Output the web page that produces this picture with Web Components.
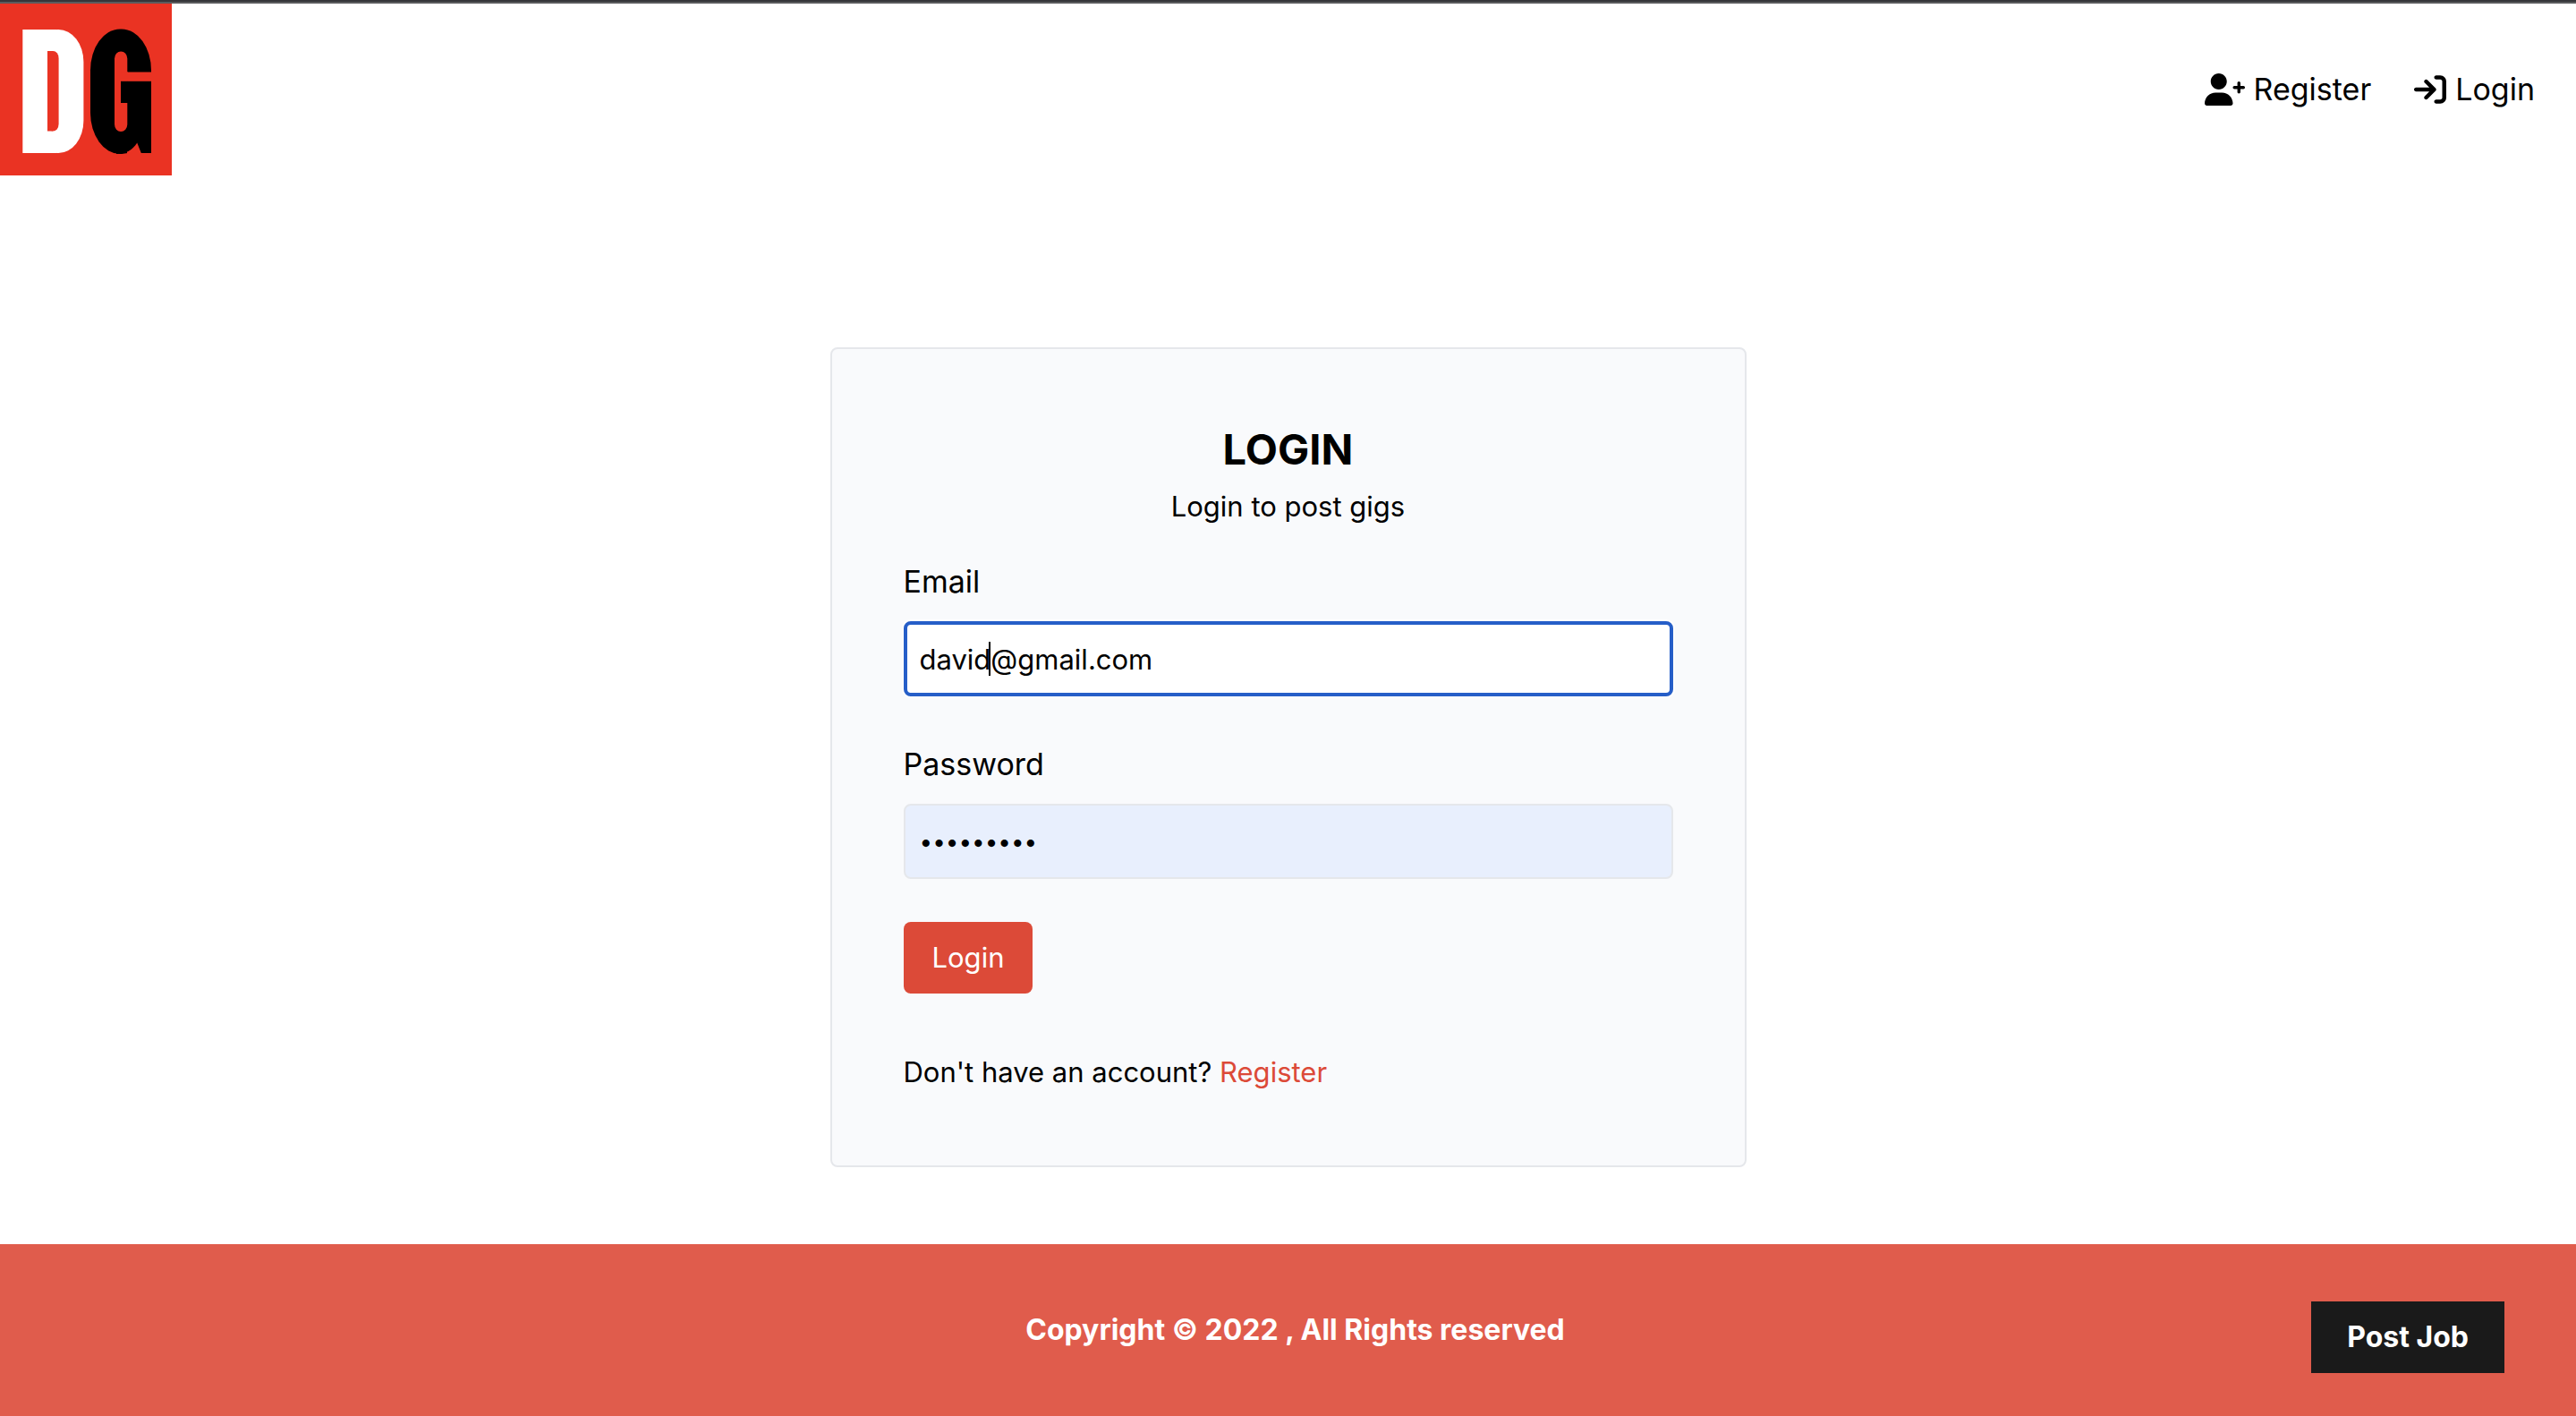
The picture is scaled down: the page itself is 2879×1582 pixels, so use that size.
<!DOCTYPE html>
<html lang="en">
<head>
<meta charset="utf-8">
<meta name="viewport" content="width=device-width, initial-scale=1">
<title>Login</title>
<style>
  body {
    margin: 0;
    background: #fff;
    color: #000;
    font-family: Inter, "Liberation Sans", sans-serif;
    font-size: 31px;
    line-height: 48px;
    --brand: #dc4a38;
    --text-lg: 34px;
  }
</style>
</head>
<body>
<gig-page>
  <site-header slot="header">
    <nav-link href="#register" icon="user-plus">Register</nav-link>
    <nav-link href="#login" icon="enter">Login</nav-link>
  </site-header>
  <login-card heading="Login" intro="Login to post gigs"></login-card>
  <site-footer slot="footer">Copyright © 2022 , All Rights reserved</site-footer>
</gig-page>

<script>
const define = (name, html, setup) => {
  const template = document.createElement('template');
  template.innerHTML = '<style>*,::before,::after{box-sizing:border-box}</style>' + html;
  customElements.define(name, class extends HTMLElement {
    constructor() {
      super();
      this.attachShadow({ mode: 'open' }).append(template.content.cloneNode(true));
    }
    connectedCallback() { if (setup) setup(this, this.shadowRoot); }
  });
};

define('gig-page', `
  <style>
    :host { display: flex; flex-direction: column; min-height: 100vh; box-sizing: border-box;
            border-top: 4px solid #5a5b5d; background: #fff; background-clip: padding-box; position: relative; }
    :host::before { content: ""; position: absolute; top: -4px; left: 0; right: 0; height: 2px; background: #35363a; }
    main { flex: 1; display: flex; justify-content: center; align-items: flex-start; padding: 192px 32px 86px; }
  </style>
  <slot name="header"></slot>
  <main><slot></slot></main>
  <slot name="footer"></slot>`);

/* Monogram built from plain blocks on a red square */
define('brand-logo', `
  <style>
    :host { display: block; }
    svg { display: block; width: 192px; height: 192px; }
  </style>
  <svg viewBox="0 0 192 192" role="img" aria-label="DG">
    <rect width="192" height="192" fill="#ea3323"/>
    <g fill="#fff">
      <rect x="25.3" y="29" width="38" height="138"/>
      <rect x="36" y="29" width="57.4" height="138" rx="28" ry="36"/>
    </g>
    <g fill="#ea3323">
      <rect x="53" y="53" width="12.600" height="89.500" rx="6.300" ry="8"/>
      <rect x="53" y="53" width="6" height="89.500"/>
    </g>
    <rect x="101" y="28.500" width="68" height="139.500" rx="33" ry="46"/>
    <rect x="140" y="87" width="29" height="50"/>
    <rect x="142" y="148" width="28" height="22" fill="#ea3323"/>
    <path d="M130 168C140 168 148 164 153.300 155.500V130H130Z"/>
    <path d="M153 130V155L157.800 167H169V130Z"/>
    <g fill="#ea3323">
      <rect x="128" y="53.500" width="14.300" height="89.500" rx="7.100" ry="8"/>
      <rect x="142" y="76.500" width="28" height="10.300"/>
      <rect x="135" y="76.500" width="8" height="10.300"/>
    </g>
    <rect x="135" y="86.800" width="8" height="24.200"/>
  </svg>`);

define('site-header', `
  <style>
    :host { display: block; }
    header { display: flex; justify-content: space-between; align-items: center; }
    a { display: block; }
    nav { display: flex; gap: 48px; padding-right: 46px; }
  </style>
  <header>
    <a href="#home"><brand-logo></brand-logo></a>
    <nav><slot></slot></nav>
  </header>`);

const icons = {
  'user-plus': ['0 0 640 512', 45, 'M224 256c70.7 0 128-57.31 128-128S294.7 0 224 0C153.3 0 96 57.31 96 128S153.3 256 224 256zM274.7 304H173.3C77.6 304 0 381.6 0 477.3C0 496.5 15.52 512 34.66 512H413.3C432.5 512 448 496.5 448 477.3C448 381.6 370.4 304 274.7 304zM616 200h-48v-48C568 138.8 557.3 128 544 128s-24 10.75-24 24v48h-48C458.8 200 448 210.8 448 224s10.75 24 24 24h48v48C520 309.3 530.8 320 544 320s24-10.75 24-24v-48h48C629.3 248 640 237.3 640 224S629.3 200 616 200z'],
  'enter': ['0 0 512 512', 36, 'M416 32h-64c-17.67 0-32 14.33-32 32s14.33 32 32 32h64c17.67 0 32 14.33 32 32v256c0 17.67-14.33 32-32 32h-64c-17.67 0-32 14.33-32 32s14.33 32 32 32h64c53.02 0 96-42.98 96-96V128C512 74.98 469 32 416 32zM342.6 233.4l-128-128c-12.51-12.51-32.76-12.49-45.25 0c-12.5 12.5-12.5 32.75 0 45.25L242.8 224H32C14.33 224 0 238.3 0 256s14.33 32 32 32h210.8l-73.38 73.38c-12.5 12.5-12.5 32.75 0 45.25s32.75 12.5 45.25 0l128-128C355.1 266.1 355.1 245.9 342.6 233.4z']
};

define('nav-link', `
  <style>
    :host { display: block; }
    a { display: flex; align-items: center; gap: 10px; color: inherit; text-decoration: none;
        font-size: var(--text-lg); line-height: 56px; }
    svg { display: block; height: 36px; fill: currentColor; }
  </style>
  <a><svg aria-hidden="true"><path/></svg><span><slot></slot></span></a>`,
  (host, root) => {
    const [box, width, d] = icons[host.getAttribute('icon')];
    const svg = root.querySelector('svg');
    svg.setAttribute('viewBox', box);
    svg.style.width = width + 'px';
    svg.firstElementChild.setAttribute('d', d);
    root.querySelector('a').href = host.getAttribute('href');
  });

define('form-field', `
  <style>
    :host { display: block; position: relative; }
    label { display: block; font-size: var(--text-lg); line-height: 56px; margin-bottom: 16px; }
    input { display: block; width: 100%; height: 84px; padding: 16px; border: 2px solid #e5e7eb; border-radius: 8px;
            font: inherit; color: inherit; background: #fff; outline: none; }
    input[type="password"] { font-size: 26px; }
    :host([autofilled]) input { background: #e8effd; }
    :host([active]) input { outline: 4px solid #265ec8; outline-offset: -4px; box-shadow: 0 0 0 2px #fff; }
    i { display: none; position: absolute; bottom: 23px; left: 95px; width: 2px; height: 38px; background: #000; }
    :host([active]) i { display: block; }
  </style>
  <label for="field"></label>
  <input id="field"><i></i>`,
  (host, root) => {
    root.querySelector('label').textContent = host.getAttribute('label');
    const input = root.querySelector('input');
    input.type = host.getAttribute('type');
    input.value = host.getAttribute('value');
  });

define('login-card', `
  <style>
    :host { display: block; flex: 0 1 1024px; box-sizing: border-box; padding: 80px;
            border: 2px solid #e5e7eb; border-radius: 8px; background: #f9fafc; }
    header { text-align: center; margin-bottom: 32px; }
    h2 { margin: 0 0 8px; font-size: 47px; line-height: 64px; font-weight: 700; text-transform: uppercase; }
    p { margin: 0; }
    form { display: flex; flex-direction: column; align-items: stretch; gap: 48px; }
    button { align-self: flex-start; padding: 16px 32px; border: 0; border-radius: 8px; background: var(--brand);
             color: #fff; font: inherit; }
    .more { margin-top: 16px; }
    a { color: var(--brand); text-decoration: none; }
  </style>
  <header><h2></h2><p class="intro"></p></header>
  <form>
    <form-field label="Email" type="text" value="david@gmail.com" active></form-field>
    <form-field label="Password" type="password" value="password1" autofilled></form-field>
    <button type="button">Login</button>
    <p class="more">Don't have an account? <a href="#register">Register</a></p>
  </form>`,
  (host, root) => {
    root.querySelector('h2').textContent = host.getAttribute('heading');
    root.querySelector('.intro').textContent = host.getAttribute('intro');
  });

define('site-footer', `
  <style>
    :host { display: block; }
    footer { position: relative; display: flex; align-items: center; justify-content: center; height: 192px;
             background: #e05c4c; color: #fff; font-size: 32px; font-weight: 700; }
    p { margin: 0 0 0 16px; }
    a { position: absolute; top: 64px; right: 80px; padding: 16px 40px; background: #1a1a1a; color: #fff; text-decoration: none; }
  </style>
  <footer><p><slot></slot></p><a href="#create">Post Job</a></footer>`);
</script>
</body>
</html>
